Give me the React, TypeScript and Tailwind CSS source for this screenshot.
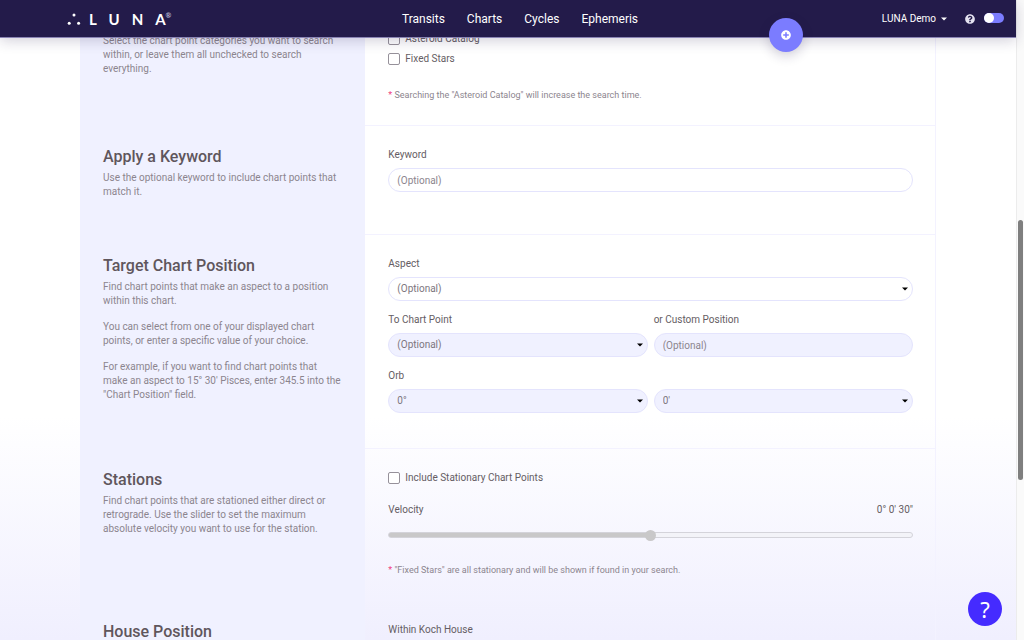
import { useState } from 'react'
import type { ReactNode } from 'react'
import { FaPlusCircle, FaQuestionCircle } from 'react-icons/fa'

const enlaces = ['Transits', 'Charts', 'Cycles', 'Ephemeris']

function Logo() {
  return (
    <a href="#" className="flex items-center gap-2 pl-[31px] text-white" aria-label="LUNA">
      <svg width="14" height="12" viewBox="0 0 14 12" fill="currentColor" aria-hidden="true">
        <circle cx="7" cy="2" r="1.5" />
        <circle cx="2.2" cy="10.2" r="1.5" />
        <circle cx="11.6" cy="10.2" r="1.5" />
      </svg>
      <span className="flex items-start font-[Lato,sans-serif] text-[15px] leading-4 font-bold">
        <span className="tracking-[12px]">LUN</span>A
        <span className="text-[7px] leading-[8px] text-[#b9b5cf]">®</span>
      </span>
    </a>
  )
}

function Header() {
  const [activo, setActivo] = useState(false)

  return (
    <header className="relative z-10 flex h-[37px] shrink-0 items-center bg-[#231b4a] pl-9 text-white shadow-[0_1px_0_#8a84b4,0_4px_14px_rgba(35,27,74,0.2)]">
      <div className="flex flex-1">
        <Logo />
      </div>
      <nav className="flex gap-[22px] text-[12px] leading-4">
        {enlaces.map((enlace) => (
          <a key={enlace} href="#">
            {enlace}
          </a>
        ))}
      </nav>
      <div className="flex flex-1 items-center justify-end pr-3">
        <button className="flex items-center gap-[5px] text-[10px] leading-4">
          LUNA Demo
          <svg width="6" height="4" viewBox="0 0 6 4" fill="currentColor" aria-hidden="true">
            <path d="M0 0.5h6L3 3.5z" />
          </svg>
        </button>
        <button aria-label="Help" className="ml-[18px] text-[#e4e2f0]">
          <FaQuestionCircle size={10} />
        </button>
        <button
          role="switch"
          aria-checked={activo}
          aria-label="Theme"
          onClick={() => setActivo(!activo)}
          className="ml-[9px] flex h-[10px] w-5 -translate-y-px items-center rounded-full bg-[#7b7cff]"
        >
          <span className="size-[10px] rounded-full bg-white" />
        </button>
      </div>
      <button
        aria-label="Add"
        className="absolute top-[18px] right-[213px] flex size-[34px] items-center justify-center rounded-full bg-[#7b7cff] shadow-[0_4px_12px_rgba(35,27,74,0.2)]"
      >
        <FaPlusCircle size={10} />
      </button>
    </header>
  )
}

function Section({
  title,
  info,
  className,
  children,
}: {
  title?: string
  info: string[]
  className: string
  children: ReactNode
}) {
  return (
    <section className={`grid grid-cols-[1fr_2fr] ${className}`}>
      <div className={`bg-[#f0f1ff] px-[23px] ${title ? 'pt-[22px]' : 'pt-[3px]'}`}>
        {title && (
          <h2 className="mb-1 text-[16px] leading-5 font-medium text-[#5f565c]">{title}</h2>
        )}
        <div className="space-y-3 text-[10px] leading-[14px] text-[#8c858e]">
          {info.map((texto) => (
            <p key={texto}>{texto}</p>
          ))}
        </div>
      </div>
      <div
        className={`border-t border-r border-[#f3f2ff] pr-[22px] pl-[23px] text-[10px] leading-[14px] text-[#655d63] ${
          title ? 'pt-[22px]' : ''
        }`}
      >
        {children}
      </div>
    </section>
  )
}

function CheckField({ id, label }: { id: string; label: string }) {
  return (
    <div className="flex items-center gap-[5px]">
      <input
        id={id}
        type="checkbox"
        className="size-3 appearance-none rounded-[2px] border border-[#96919a] bg-white checked:bg-[#7b7cff]"
      />
      <label htmlFor={id}>{label}</label>
    </div>
  )
}

function TextField({ id, label, filled }: { id: string; label: string; filled?: boolean }) {
  return (
    <div className="flex flex-col gap-[6px]">
      <label htmlFor={id}>{label}</label>
      <input
        id={id}
        type="text"
        placeholder="(Optional)"
        className={`h-6 w-full rounded-full border border-[#e4e4fd] px-2 placeholder:text-[#8c858e] ${
          filled ? 'bg-[#f0f1ff]' : 'bg-white'
        }`}
      />
    </div>
  )
}

function SelectBox({
  id,
  option,
  filled,
  name,
}: {
  id: string
  option: string
  filled?: boolean
  name?: string
}) {
  return (
    <div className="relative">
      <select
        id={id}
        aria-label={name}
        className={`block h-6 w-full appearance-none rounded-full border border-[#e4e4fd] px-2 text-[#7d767e] ${
          filled ? 'bg-[#f0f1ff]' : 'bg-white'
        }`}
      >
        <option>{option}</option>
      </select>
      <svg
        width="6"
        height="4"
        viewBox="0 0 6 4"
        className="pointer-events-none absolute top-[10px] right-[5px]"
        aria-hidden="true"
      >
        <path d="M0 0.5h6L3 3.5z" />
      </svg>
    </div>
  )
}

function Note({ children }: { children: ReactNode }) {
  return (
    <p className="text-[9px] leading-3 text-[#8c858e]">
      <span className="text-[#f0437f]">*</span> {children}
    </p>
  )
}

export default function App() {
  const [velocidad, setVelocidad] = useState(30)
  const porcentaje = (velocidad / 60) * 100

  return (
    <div className="flex h-screen overflow-hidden bg-[#fafafa] font-[Roboto,sans-serif]">
      <div className="relative flex min-w-0 flex-1 flex-col bg-linear-to-b from-white from-65% to-[#f0effe]">
        <Header />

        <main className="mx-20 min-h-0 flex-1 overflow-hidden">
          <div className="-mt-[6px]">
            <Section
              info={[
                'Select the chart point categories you want to search within, or leave them all unchecked to search everything.',
              ]}
              className="h-[94px]"
            >
              <div className="space-y-[6px]">
                <CheckField id="asteroid" label="Asteroid Catalog" />
                <CheckField id="fixed" label="Fixed Stars" />
              </div>
              <div className="pt-[23px]">
                <Note>Searching the "Asteroid Catalog" will increase the search time.</Note>
              </div>
            </Section>

            <Section
              title="Apply a Keyword"
              info={['Use the optional keyword to include chart points that match it.']}
              className="h-[109px]"
            >
              <TextField id="keyword" label="Keyword" />
            </Section>

            <Section
              title="Target Chart Position"
              info={[
                'Find chart points that make an aspect to a position within this chart.',
                'You can select from one of your displayed chart points, or enter a specific value of your choice.',
                'For example, if you want to find chart points that make an aspect to 15° 30\' Pisces, enter 345.5 into the "Chart Position" field.',
              ]}
              className="h-[214px]"
            >
              <div className="space-y-3">
                <div className="flex flex-col gap-[6px]">
                  <label htmlFor="aspect">Aspect</label>
                  <SelectBox id="aspect" option="(Optional)" />
                </div>
                <div className="grid grid-cols-2 gap-[6px]">
                  <div className="flex flex-col gap-[6px]">
                    <label htmlFor="point">To Chart Point</label>
                    <SelectBox id="point" option="(Optional)" filled />
                  </div>
                  <TextField id="position" label="or Custom Position" filled />
                </div>
                <div className="flex flex-col gap-[6px]">
                  <label htmlFor="orb">Orb</label>
                  <div className="grid grid-cols-2 gap-[6px]">
                    <SelectBox id="orb" option="0°" filled />
                    <SelectBox id="minutes" name="Orb minutes" option="0'" filled />
                  </div>
                </div>
              </div>
            </Section>

            <Section
              title="Stations"
              info={[
                'Find chart points that are stationed either direct or retrograde. Use the slider to set the maximum absolute velocity you want to use for the station.',
              ]}
              className="h-[152px]"
            >
              <CheckField id="stationary" label="Include Stationary Chart Points" />
              <div className="flex justify-between pt-[18px]">
                <label htmlFor="velocity">Velocity</label>
                <output htmlFor="velocity">0° 0' {velocidad}"</output>
              </div>
              <input
                id="velocity"
                type="range"
                min="0"
                max="60"
                value={velocidad}
                onChange={(e) => setVelocidad(Number(e.target.value))}
                className="mt-[15px] block h-[6px] w-full appearance-none rounded-full border border-[#d4d3da] [&::-webkit-slider-thumb]:size-[11px] [&::-webkit-slider-thumb]:appearance-none [&::-webkit-slider-thumb]:rounded-full [&::-webkit-slider-thumb]:bg-[#c9c8c9]"
                style={{
                  background: `linear-gradient(to right, #c9c8c9 ${porcentaje}%, #f3f3f8 ${porcentaje}%)`,
                }}
              />
              <div className="pt-[26px]">
                <Note>"Fixed Stars" are all stationary and will be shown if found in your search.</Note>
              </div>
            </Section>

            <Section
              title="House Position"
              info={['Find chart points that are placed within a house.']}
              className="h-[109px]"
            >
              <TextField id="house" label="Within Koch House" />
            </Section>
          </div>
        </main>

        <button
          aria-label="Support"
          className="absolute right-[14px] bottom-[14px] size-[34px] rounded-full bg-[#452bff] font-['Noto_Sans',sans-serif] text-[22px] leading-[34px] text-white"
        >
          ?
        </button>
      </div>

      <div className="w-2 shrink-0 border-l border-[#ececec] px-px pt-[220px]">
        <div className="h-[260px] rounded-full bg-[#7f7f7f]" />
      </div>
    </div>
  )
}
